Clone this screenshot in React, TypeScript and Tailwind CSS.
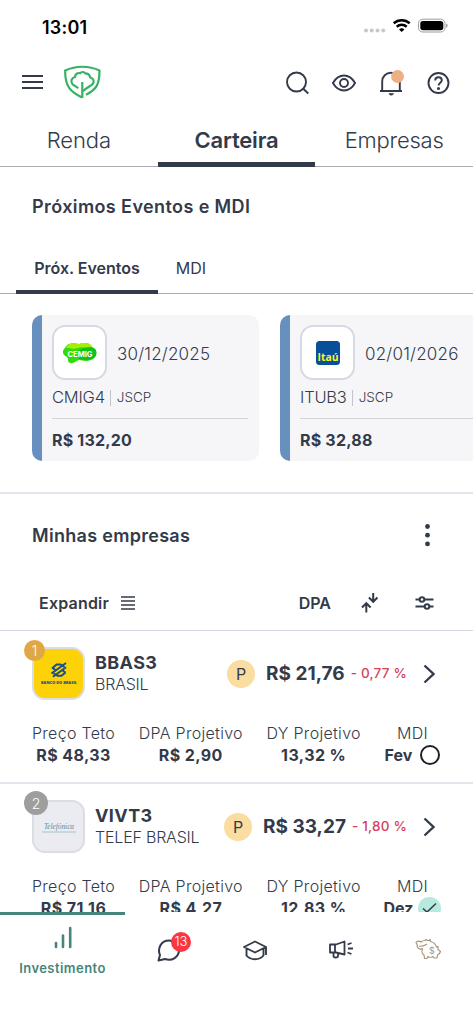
import { ReactNode } from 'react';

interface EventItem {
  date: string;
  ticker: string;
  kind: string;
  amount: string;
  logo: ReactNode;
}

interface Company {
  rank: number;
  ticker: string;
  name: string;
  price: string;
  change: string;
  ceiling: string;
  dpa: string;
  dy: string;
  month: string;
  done: boolean;
  logo: ReactNode;
}

const CemigLogo = () => (
  <svg width="36" height="22" viewBox="0 0 36 22" className="overflow-visible">
    <path d="M3 6C6 0 12 1 17 2c6-2 12-1 13 3 6 2 5 8 2 11-4 4-10 3-15 2-4 1-5 4-9 3-3-1-1-4-3-6C0 13 0 8 3 6z" fill="#2fdc0c" />
    <path d="M4 6C7 0 12 1 17 2c6-2 12-1 13 3-6 2-9-1-14 1C10 8 7 5 4 6z" fill="#a8ee00" />
    <path d="M17 8c6-3 12-4 16-1 3 4 1 9-3 10-5 2-9 1-13 0z" fill="#0cc51c" />
    <text x="5.500" y="14.500" textLength="25" lengthAdjust="spacingAndGlyphs" fill="#fff" fontFamily="Inter, sans-serif" fontSize="8" fontWeight="700">CEMIG</text>
  </svg>
);

const ItauLogo = () => (
  <svg width="24" height="24" viewBox="0 0 24 24" className="overflow-visible">
    <rect width="24" height="24" rx="3.500" fill="#084f9a" />
    <text x="1.500" y="20" textLength="21" lengthAdjust="spacingAndGlyphs" fill="#fff22d" fontFamily="Open Sans, sans-serif" fontSize="10.500" fontWeight="700">Itaú</text>
  </svg>
);

const BancoLogo = () => (
  <svg width="38" height="24" viewBox="0 0 38 24" className="overflow-visible">
    <g fill="none" stroke="#17508c" strokeWidth="2">
      <path d="M12 6.500 16.500 2.500h4.500M11.500 11.500 26 1M13 14.800 26 5.200M25.500 10.500 21.500 13.800H17" />
      <path d="M12.500 5.500l3 2.800M25.500 10.800l-3-2.600M21 2.500l3.500 2.500M17 13.800l-3.500-2.500" />
    </g>
    <text x="1" y="21.500" textLength="36" lengthAdjust="spacingAndGlyphs" fill="#17508c" fontFamily="Open Sans, sans-serif" fontSize="4.200" fontWeight="800">BANCO DO BRASIL</text>
  </svg>
);

const TelefonicaLogo = () => (
  <svg width="36" height="14" viewBox="0 0 36 14" className="overflow-visible">
    <text x="3" y="8.500" textLength="30" lengthAdjust="spacingAndGlyphs" fill="#5c8792" fontFamily="Liberation Serif, serif" fontSize="9" fontStyle="italic">Telefónica</text>
    <path d="M1 12h34" stroke="#a9bfc8" strokeWidth="1" />
  </svg>
);

const EVENTS: EventItem[] = [
  { date: '30/12/2025', ticker: 'CMIG4', kind: 'JSCP', amount: 'R$ 132,20', logo: <CemigLogo /> },
  { date: '02/01/2026', ticker: 'ITUB3', kind: 'JSCP', amount: 'R$ 32,88', logo: <ItauLogo /> },
];

const COMPANIES: Company[] = [
  {
    rank: 1, ticker: 'BBAS3', name: 'BRASIL', price: 'R$ 21,76', change: '- 0,77 %',
    ceiling: 'R$ 48,33', dpa: 'R$ 2,90', dy: '13,32 %', month: 'Fev', done: false, logo: <BancoLogo />,
  },
  {
    rank: 2, ticker: 'VIVT3', name: 'TELEF BRASIL', price: 'R$ 33,27', change: '- 1,80 %',
    ceiling: 'R$ 71,16', dpa: 'R$ 4,27', dy: '12,83 %', month: 'Dez', done: true, logo: <TelefonicaLogo />,
  },
];

function StatusBar() {
  return (
    <div className="flex h-[54px] shrink-0 items-center justify-between pl-[42px] pr-[25px] text-black">
      <span className="text-[18px] font-semibold tracking-[0.2px]">13:01</span>
      <svg className="mb-[2px]" width="84" height="16" viewBox="0 0 84 16">
        <g fill="#c8c8ca">
          <circle cx="2" cy="12.500" r="2" />
          <circle cx="7.700" cy="12.500" r="2" />
          <circle cx="13.500" cy="12.500" r="2" />
          <circle cx="19.200" cy="12.500" r="2" />
        </g>
        <g fill="none" stroke="#000" strokeWidth="2.500">
          <path d="M29.700 5.200a12 12 0 0 1 16 0" />
          <path d="M32.700 8.700a7.500 7.500 0 0 1 10 0" />
        </g>
        <path d="M35 11.500a4 4 0 0 1 5.400 0L37.700 14z" />
        <rect x="54.500" y="1.200" width="26.500" height="12.800" rx="4.200" fill="none" stroke="#9c9c9c" />
        <rect x="56.300" y="3" width="23" height="9.200" rx="2.700" />
        <path d="M82.300 5.500c1.700.5 1.700 3.700 0 4.200z" fill="#8c8c8c" />
      </svg>
    </div>
  );
}

function Header() {
  return (
    <div className="flex h-14 shrink-0 items-center justify-between pl-[22px] pr-[23px]">
      <div className="flex items-center gap-[21px]">
        <svg width="21" height="16" viewBox="0 0 21 16" stroke="#333a4a" strokeWidth="2">
          <path d="M0 2h21M0 8h21M0 14h21" />
        </svg>
        <svg width="37" height="34" viewBox="0 0 37 34" fill="none" stroke="#35b264" strokeWidth="2.200">
          <path d="M18 32.500C7 27 .8 22 1.200 5.500 12 .5 25 .5 35.500 5.500c0 14-3 19-13.500 24.200" />
          <path d="M18.300 33V17" />
          <path d="M14.300 23.200 8.600 19.300c-2.500-2.700-1-6.500 2.400-7.300 0-3 3-4.500 5-3.800 1.500-1.800 4.200-1.500 5.300.2 2.700 0 4.400 1.500 4.800 3.800 3.800 1.200 4.500 4.600 2.300 7-2 2.200-6 3.600-9.900 7.300" />
        </svg>
      </div>
      <div className="flex items-center gap-[23px] pt-px text-[#333a4a]">
        <svg width="24" height="24" viewBox="0 0 24 24" fill="none" stroke="currentColor" strokeWidth="1.900">
          <circle cx="11.500" cy="11" r="9.500" />
          <path d="m18 17.500 5.300 5" />
        </svg>
        <svg width="24" height="24" viewBox="0 0 24 24" fill="none" stroke="currentColor" strokeWidth="1.900">
          <path d="M.9 12C3.800 7 7.700 4.500 12 4.500S20.200 7 23.100 12C20.200 17 16.300 19.500 12 19.500S3.800 17 .9 12z" />
          <circle cx="12" cy="12" r="4" />
        </svg>
        <div className="relative h-6 w-6">
          <svg width="24" height="26" viewBox="0 0 24 26" fill="none" stroke="currentColor" strokeWidth="1.900">
            <path d="M3.200 20V10.500C3.200 5.500 7 1.700 12 1.700s8.800 3.800 8.800 8.800V20M1 20h22" />
            <path d="M10 22.500h4.500c-.3 2.200-4.200 2.200-4.500 0z" fill="currentColor" strokeWidth=".6" />
          </svg>
          <span className="absolute -top-[1px] left-3 h-[13px] w-[13px] rounded-full bg-[#edb083]" />
        </div>
        <svg width="24" height="24" viewBox="0 0 24 24" fill="none" stroke="currentColor" strokeWidth="1.900">
          <circle cx="12.500" cy="12" r="10" />
          <path d="M9.200 9.500C9.200 7.500 10.600 6.300 12.500 6.300s3.300 1.200 3.300 3c0 2.400-3.200 2.500-3.200 5.200" />
          <circle cx="12.500" cy="17.500" r=".6" fill="currentColor" />
        </svg>
      </div>
    </div>
  );
}

function MainTabs() {
  return (
    <div className="grid h-[57px] shrink-0 grid-cols-3 border-b border-[#a9aab2] text-center text-[22px] leading-[60px]">
      <span className="font-light tracking-[-0.1px]">Renda</span>
      <span className="h-[57px] border-b-[5px] border-[#333a4a] font-semibold tracking-[-0.2px]">Carteira</span>
      <span className="font-light tracking-[-0.2px]">Empresas</span>
    </div>
  );
}

function EventCard({ event }: { event: EventItem }) {
  return (
    <div className="flex h-[146px] w-[227px] shrink-0 overflow-hidden rounded-[10px] bg-[#f6f6f9]">
      <div className="w-[10px] bg-[#6890bf]" />
      <div className="flex w-[206px] flex-col pl-[10px] pt-[10px]">
        <div className="flex items-center gap-[10px]">
          <div className="flex h-[55px] w-[55px] items-center justify-center rounded-[13px] border-2 border-[#d7dae4] bg-white">
            {event.logo}
          </div>
          <span className="pt-[4px] text-[17px] font-light tracking-[0.2px]">{event.date}</span>
        </div>
        <div className="mt-[5px] flex h-[25px] items-center">
          <span className="text-[16.5px] font-light tracking-[-0.2px]">{event.ticker}</span>
          <span className="ml-[5px] h-4 w-px bg-[#c3c5cb]" />
          <span className="ml-[6px] text-[13.5px] font-light">{event.kind}</span>
        </div>
        <div className="mt-2 h-px bg-[#d2d4d8]" />
        <span className="mt-[9px] text-[16px] font-bold leading-6 tracking-[0.2px]">{event.amount}</span>
      </div>
    </div>
  );
}

function Column({ label, className, children }: { label: string; className: string; children: ReactNode }) {
  return (
    <div className={`flex flex-col items-center whitespace-nowrap ${className}`}>
      <span className="text-[16px] font-light leading-[22px] tracking-[0.3px]">{label}</span>
      <div className="flex h-[22px] items-center justify-center text-[16px] font-bold leading-[22px] tracking-[0.4px]">{children}</div>
    </div>
  );
}

function CompanyRow({ company }: { company: Company }) {
  const first = company.rank === 1;
  return (
    <div className="h-[153px] shrink-0 border-b-2 border-[#e5e6ed] px-8 pt-4">
      <div className="flex h-[53px] items-center">
        <div className="relative shrink-0">
          <div
            className={`flex h-[53px] w-[53px] items-center justify-center rounded-[13px] border-2 border-[#dbdde5] ${
              first ? 'bg-[#fdd208]' : 'bg-[#ebecf1]'
            }`}
          >
            {company.logo}
          </div>
          <span
            className={`absolute flex items-center justify-center rounded-full text-[14px] font-light text-white ${
              first ? '-left-2 -top-[7px] h-[21px] w-[21px] bg-[#dfa845]' : '-left-2 -top-[9px] h-6 w-6 bg-[#9e9e9e]'
            }`}
          >
            {company.rank}
          </span>
        </div>
        <div className="ml-[10px] flex flex-col whitespace-nowrap">
          <span className="text-[18px] font-bold leading-[22px] tracking-[0.4px]">{company.ticker}</span>
          <span className="text-[16px] font-light leading-[21px] tracking-[-0.2px]">{company.name}</span>
        </div>
        <div className="ml-auto flex items-center whitespace-nowrap">
          <span className="flex h-7 w-7 items-center justify-center rounded-full bg-[#fbdca1] text-[16px]">P</span>
          <span className="ml-[11px] pt-px text-[19px] font-bold">{company.price}</span>
          <span className="ml-[6px] text-[13.5px] font-medium tracking-[0.2px] text-[#d63f58]">{company.change}</span>
          <svg className="ml-4 mr-[5px]" width="13" height="20" viewBox="0 0 13 20" fill="none" stroke="#333a4a" strokeWidth="2.400">
            <path d="m1.500 1.500 9 8.500-9 8.500" />
          </svg>
        </div>
      </div>
      <div className="mt-[22px] flex justify-between">
        <Column label="Preço Teto" className="w-[83px]">{company.ceiling}</Column>
        <Column label="DPA Projetivo" className="w-[105px]">{company.dpa}</Column>
        <Column label="DY Projetivo" className="w-[94px]">{company.dy}</Column>
        <Column label="MDI" className="w-[57px]">
          <span className="tracking-normal">{company.month}</span>
          {company.done ? (
            <span className="ml-[5px] flex h-[23px] w-[23px] shrink-0 items-center justify-center rounded-full bg-[#b8e9df]">
              <svg width="15" height="12" viewBox="0 0 15 12" fill="none" stroke="#333a4a" strokeWidth="1.500">
                <path d="m1 6.500 4 3.500L14 1.500" />
              </svg>
            </span>
          ) : (
            <span className="ml-2 h-5 w-5 shrink-0 rounded-full border-2 border-[#202124]" />
          )}
        </Column>
      </div>
    </div>
  );
}

function BottomNav() {
  return (
    <div className="relative z-10 flex h-[112px] shrink-0 bg-white">
      <div className="flex w-[125px] flex-col items-center border-t-[3px] border-[#45857c] text-[#45857c]">
        <svg className="mt-[11px]" width="18" height="23" viewBox="0 0 18 23" stroke="currentColor" strokeWidth="2.600" strokeLinecap="round">
          <path d="M2 17v4M9 9.500V21M16.200 2v19" />
        </svg>
        <span className="mt-[9px] text-[13px] font-semibold leading-5 tracking-[0.45px]">Investimento</span>
      </div>
      <div className="flex flex-1 items-start justify-between pl-8 pr-8 pt-[26px] text-[#333a4a]">
        <div className="relative">
          <svg width="24" height="24" viewBox="0 0 24 24" fill="none" stroke="currentColor" strokeWidth="2" strokeLinejoin="round">
            <path d="M1.500 22.500 3 17C0 10 4.500 2.500 12 2.500c6 0 10 4.300 10 9.500 0 7-7 11.500-14 9z" />
          </svg>
          <span className="absolute -top-[6px] left-[14px] flex h-5 w-5 items-center justify-center rounded-full bg-[#fb3640] text-[13px] font-light text-white">13</span>
        </div>
        <svg width="26" height="24" viewBox="0 0 26 24" fill="none" stroke="currentColor" strokeWidth="1.900" strokeLinejoin="round">
          <path d="M2 9 13 3.500 24 9 13 14.500zM4.500 11v6.500c4 5 13 5 17 0V11M24 9v8" />
        </svg>
        <svg width="26" height="24" viewBox="0 0 26 24" fill="none" stroke="currentColor" strokeWidth="1.800" strokeLinejoin="round">
          <path d="M2 6.500h6L16.500 3.500v13L8 14.500H2zM7 6.500v8M5.500 14.500V18c0 2 4.500 2 4.500 0v-3M19.500 6.500l4-1.500M20 10.500h5M19.500 14.500l4 1.500" />
        </svg>
        <svg width="26" height="24" viewBox="0 0 26 24" fill="none" stroke="#a9977a" strokeWidth="1.200" strokeLinejoin="round">
          <path d="M1 4.500c1-2 4-1.500 5-.5C7 3 8.500 2.500 10 2.500l1-1 1.500 1H14l1-1 .5 2c3 .5 5 3 6 5.500l1.500-.5v3l2.500 2c-.5 2-2 3-3 3.500l-.5 3h-3l-1-1.500c-1.500 1-4 1-5 0l-1 2H9.500L9 17c-2-1-2.500-4-1.500-6.500-3 1.500-6-.5-5-3z" />
          <path d="M4 8c3 1 6-1 8-2" />
          <text x="14" y="16" fill="#a9977a" stroke="none" fontSize="9" fontFamily="Inter, sans-serif">$</text>
        </svg>
      </div>
    </div>
  );
}

export default function App() {
  return (
    <div className="flex h-[1024px] w-[473px] flex-col overflow-hidden bg-white font-['Inter',sans-serif] text-[#333a4a]">
      <StatusBar />
      <Header />
      <MainTabs />

      <h2 className="mt-[26px] shrink-0 pl-8 text-[18px] font-semibold leading-7 tracking-[0.4px]">Próximos Eventos e MDI</h2>
      <div className="mt-[23px] flex h-[50px] shrink-0 border-b border-[#a9aab2] pl-4 text-center text-[16px] leading-[48px]">
        <span className="h-[50px] w-[142px] border-b-4 border-[#333a4a] font-semibold">Próx. Eventos</span>
        <span className="w-[66px]">MDI</span>
      </div>
      <div className="mt-[21px] flex shrink-0 gap-[21px] pl-8">
        {EVENTS.map((event) => (
          <EventCard key={event.ticker} event={event} />
        ))}
      </div>

      <div className="mt-[31px] flex h-[86px] shrink-0 items-center justify-between border-t-2 border-[#e5e6ed] pb-[2px] pl-8 pr-[43px]">
        <h2 className="text-[18px] font-semibold tracking-[0.3px]">Minhas empresas</h2>
        <svg width="5" height="23" viewBox="0 0 5 23" fill="#333a4a">
          <circle cx="2.500" cy="2.500" r="2.400" />
          <circle cx="2.500" cy="11.200" r="2.400" />
          <circle cx="2.500" cy="19.900" r="2.400" />
        </svg>
      </div>
      <div className="flex h-[53px] shrink-0 items-center border-b border-[#d5d7e1] pb-[2px] pl-[39px] pr-[39px]">
        <span className="text-[16px] font-semibold tracking-[0.2px]">Expandir</span>
        <svg className="ml-3" width="14" height="14" viewBox="0 0 14 14" stroke="#333a4a" strokeWidth="1.700">
          <path d="M0 1h14M0 5h14M0 9h14M0 13h14" />
        </svg>
        <span className="ml-auto text-[16px] font-semibold">DPA</span>
        <svg className="ml-[30px]" width="18" height="20" viewBox="0 0 18 20" fill="none" stroke="#333a4a" strokeWidth="2">
          <path d="M5.300 19.500v-8M1 14.500l4.300-4.300 4.300 4.300M12.200 0v8M7.900 4.500l4.300 4.300 4.300-4.300" />
        </svg>
        <svg className="ml-9" width="19" height="14" viewBox="0 0 19 14" fill="none" stroke="#333a4a" strokeWidth="2">
          <path d="M.5 3.500h4M9.500 3.500h9M.5 10.500h9M14.500 10.500h4" />
          <circle cx="7" cy="3.500" r="2.300" />
          <circle cx="12" cy="10.500" r="2.300" />
        </svg>
      </div>

      <div className="min-h-0 flex-1 overflow-hidden">
        {COMPANIES.map((company) => (
          <CompanyRow key={company.ticker} company={company} />
        ))}
      </div>
      <BottomNav />
    </div>
  );
}
